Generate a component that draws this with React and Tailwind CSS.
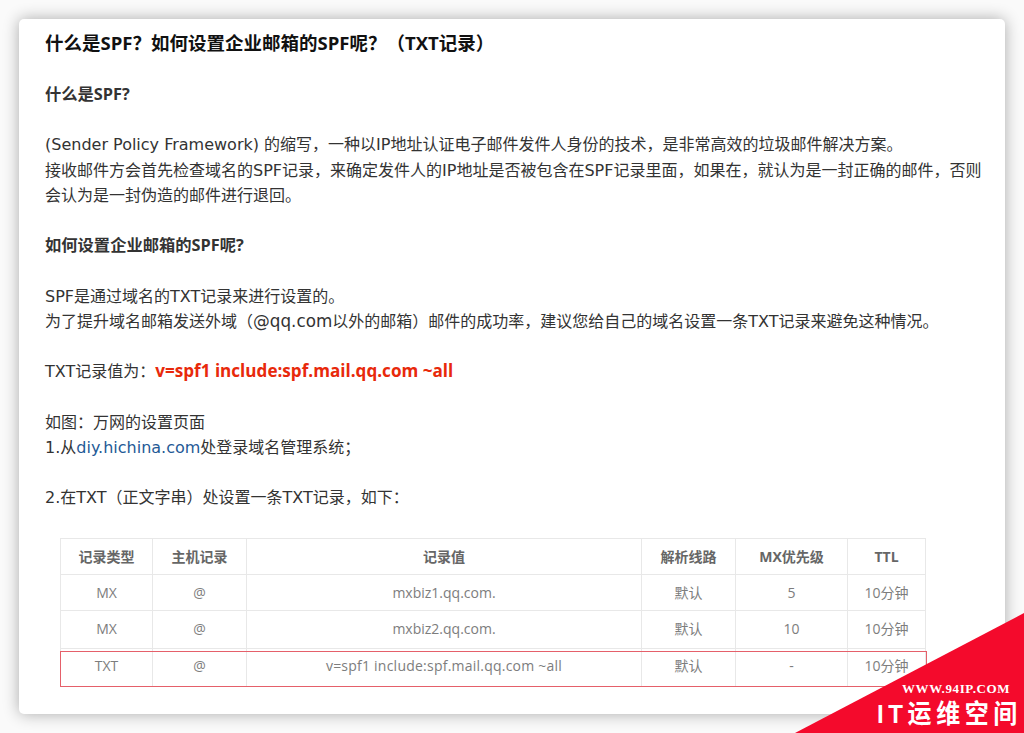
const cjk = '"DejaVu Sans","Noto Sans CJK SC",sans-serif';
const bold = '"Open Sans","Noto Sans CJK SC",sans-serif';
const cols = ['w-[92px]','w-[94px]','w-[395px]','w-[94px]','w-[112px]','w-[77px]'];
const head = ['记录类型','主机记录','记录值','解析线路','MX优先级','TTL'];
const rows = [
  ['MX','@','mxbiz1.qq.com.','默认','5','10分钟'],
  ['MX','@','mxbiz2.qq.com.','默认','10','10分钟'],
  ['TXT','@',<span className="tracking-[0.23px]">v=spf1 include:spf.mail.qq.com ~all</span>,'默认','-','10分钟'],
];
function Row({cells,isHead,h,last,pad}){
  return <div className={`flex ${h} ${last?'':'border-b border-[#e8e8e8]'}`}>
    {cells.map((c,i)=><div key={i} className={`${cols[i]} shrink-0 flex items-center justify-center ${pad||''} ${i<5?'border-r border-[#e8e8e8]':''} ${isHead?'font-bold text-[#666]':'text-[#7d7d7d]'}`}>{c}</div>)}
  </div>;
}
export default function App(){
  return <div className="relative w-[1024px] h-[733px] overflow-hidden bg-[#fafafa] p-[19px]" style={{fontFamily:cjk}}>
    <div className="w-[986px] h-[695px] bg-white rounded-[5px] shadow-[0_0_16px_rgba(0,0,0,0.32)] pl-[26px] pr-[20px] pt-[11px] text-[16px] leading-[25.2px] text-[#333]">
      <h1 className="text-[18.5px] font-bold leading-[26px] text-[#111]" style={{fontFamily:bold}}>什么是SPF？如何设置企业邮箱的SPF呢？（TXT记录）</h1>
      <p className="mt-[26px] font-bold text-[16.3px]" style={{fontFamily:bold}}>什么是SPF?</p>
      <p className="mt-[25.2px]">(Sender Policy Framework) 的缩写，一种以IP地址认证电子邮件发件人身份的技术，是非常高效的垃圾邮件解决方案。</p>
      <p>接收邮件方会首先检查域名的SPF记录，来确定发件人的IP地址是否被包含在SPF记录里面，如果在，就认为是一封正确的邮件，否则会认为是一封伪造的邮件进行退回。</p>
      <p className="mt-[25.2px] font-bold text-[16.3px]" style={{fontFamily:bold}}>如何设置企业邮箱的SPF呢?</p>
      <p className="mt-[25.2px]">SPF是通过域名的TXT记录来进行设置的。</p>
      <p>为了提升域名邮箱发送外域（<span className="text-[16.8px] leading-none">@qq.com</span>以外的邮箱）邮件的成功率，建议您给自己的域名设置一条TXT记录来避免这种情况。</p>
      <p className="mt-[25.2px]">TXT记录值为：<span className="font-bold text-[#e8290b] text-[17.1px] leading-none" style={{fontFamily:bold}}>v=spf1 include:spf.mail.qq.com ~all</span></p>
      <p className="mt-[25.2px]">如图：万网的设置页面</p>
      <p>1.从<span className="text-[#1f5a96]">diy.hichina.com</span>处登录域名管理系统；</p>
      <p className="mt-[25.2px]">2.在TXT（正文字串）处设置一条TXT记录，如下：</p>
      <div className="relative ml-[15px] mt-[28px] w-[866px] text-[14px] leading-none border-t border-l border-r border-[#e8e8e8]" style={{fontFamily:bold}}>
        <Row cells={head} isHead h="h-[36px]"/>
        <Row cells={rows[0]} h="h-[36px]"/>
        <Row cells={rows[1]} h="h-[38px]" pad="pb-[2px]"/>
        <Row cells={rows[2]} h="h-[37px]" last pad="pb-[3px]"/>
        <div className="absolute left-[-1px] right-[-2px] top-[112px] h-[36px] border-[1.5px] border-[#e5606a]"/>
      </div>
    </div>
    <svg className="absolute left-0 top-0" width="1024" height="733"><polygon points="795,733 1024,613 1024,733" fill="#f40a2c"/></svg>
    <div className="absolute left-[902px] top-[681px] text-[13px] leading-[16px] font-bold text-white tracking-[0.6px]" style={{fontFamily:'"Liberation Serif",serif'}}>WWW.94IP.COM</div>
    <div className="absolute left-[877px] top-[697px] text-[24px] leading-[34px] font-bold text-white tracking-[4.6px] whitespace-nowrap scale-y-110" style={{fontFamily:'"Liberation Sans","Noto Sans CJK SC",sans-serif'}}>IT运维空间</div>
  </div>;
}
